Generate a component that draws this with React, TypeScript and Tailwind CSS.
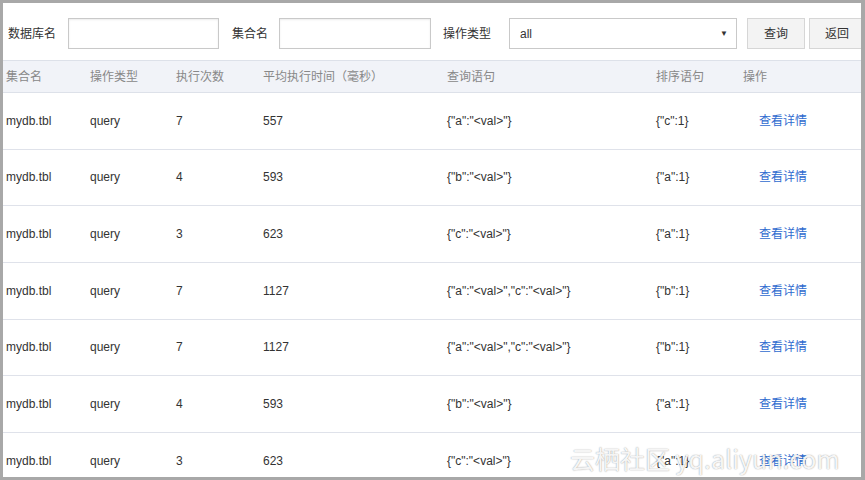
import React from "react";

const rows = [
  { coll: "mydb.tbl", op: "query", count: "7", avg: "557", q: '{"a":"<val>"}', sort: '{"c":1}' },
  { coll: "mydb.tbl", op: "query", count: "4", avg: "593", q: '{"b":"<val>"}', sort: '{"a":1}' },
  { coll: "mydb.tbl", op: "query", count: "3", avg: "623", q: '{"c":"<val>"}', sort: '{"a":1}' },
  { coll: "mydb.tbl", op: "query", count: "7", avg: "1127", q: '{"a":"<val>","c":"<val>"}', sort: '{"b":1}' },
  { coll: "mydb.tbl", op: "query", count: "7", avg: "1127", q: '{"a":"<val>","c":"<val>"}', sort: '{"b":1}' },
  { coll: "mydb.tbl", op: "query", count: "4", avg: "593", q: '{"b":"<val>"}', sort: '{"a":1}' },
  { coll: "mydb.tbl", op: "query", count: "3", avg: "623", q: '{"c":"<val>"}', sort: '{"a":1}' },
];

const cols = "grid grid-cols-[84px_86px_87px_184px_209px_87px_1fr] pl-[3px]";

const App = () => {
  return (
    <div className="w-[865px] h-[480px] overflow-hidden bg-[#a8a8a8] pl-[3px] pt-[3px] pr-[4px] pb-[3px] font-['Liberation_Sans','Noto_Sans_CJK_SC',sans-serif] text-[12px]">
      <div className="relative w-full h-full bg-white overflow-hidden">
        {/* Search bar */}
        <div className="flex items-center h-[57px] pt-[4px] pl-[5px] text-[#333] whitespace-nowrap">
          <span className="w-[48px] shrink-0">数据库名</span>
          <input className="ml-[12px] w-[151px] h-[31px] shrink-0 border border-[#c9c9c9] shadow-[inset_0_1px_2px_rgba(0,0,0,0.08)] outline-none" />
          <span className="ml-[13px] w-[36px] shrink-0">集合名</span>
          <input className="ml-[11px] w-[152px] h-[31px] shrink-0 border border-[#c9c9c9] shadow-[inset_0_1px_2px_rgba(0,0,0,0.08)] outline-none" />
          <span className="ml-[12px] w-[48px] shrink-0">操作类型</span>
          <div className="ml-[18px] w-[228px] h-[31px] shrink-0 border border-[#c9c9c9] flex items-center justify-between pl-[10px] pr-[8px]">
            <span>all</span>
            <span className="text-[8px] text-[#333]">▼</span>
          </div>
          <button className="ml-[10px] w-[58px] h-[31px] shrink-0 border border-[#d6d6d6] bg-[#f3f3f3] text-[#333]">查询</button>
          <button className="ml-[4px] w-[58px] h-[31px] shrink-0 border border-[#d6d6d6] bg-[#f3f3f3] text-[#333] text-left pl-[15px]">返回</button>
        </div>

        {/* Table header */}
        <div className={`${cols} h-[33px] items-center bg-[#f1f3f8] border-t border-b border-[#dde1e9] text-[#888]`}>
          <span>集合名</span>
          <span>操作类型</span>
          <span>执行次数</span>
          <span>平均执行时间（毫秒）</span>
          <span>查询语句</span>
          <span>排序语句</span>
          <span>操作</span>
        </div>

        {/* Table body */}
        {rows.map((r, i) => (
          <div key={i} className={`${cols} h-[56.67px] items-center border-b border-[#dfe2ea] text-[#333]`}>
            <span>{r.coll}</span>
            <span>{r.op}</span>
            <span>{r.count}</span>
            <span>{r.avg}</span>
            <span>{r.q}</span>
            <span>{r.sort}</span>
            <span className="pl-[16px] text-[#2f6bcf]">查看详情</span>
          </div>
        ))}

        {/* Watermark */}
        <div className="absolute left-[567px] top-[437px] text-[25px] text-white/90 whitespace-nowrap [text-shadow:0_0_1px_rgba(0,0,0,0.35),0_0_2px_rgba(0,0,0,0.15)] font-['Noto_Sans_CJK_SC',sans-serif]">
          云栖社区 yq.aliyun.com
        </div>
      </div>
    </div>
  );
};

export default App;
